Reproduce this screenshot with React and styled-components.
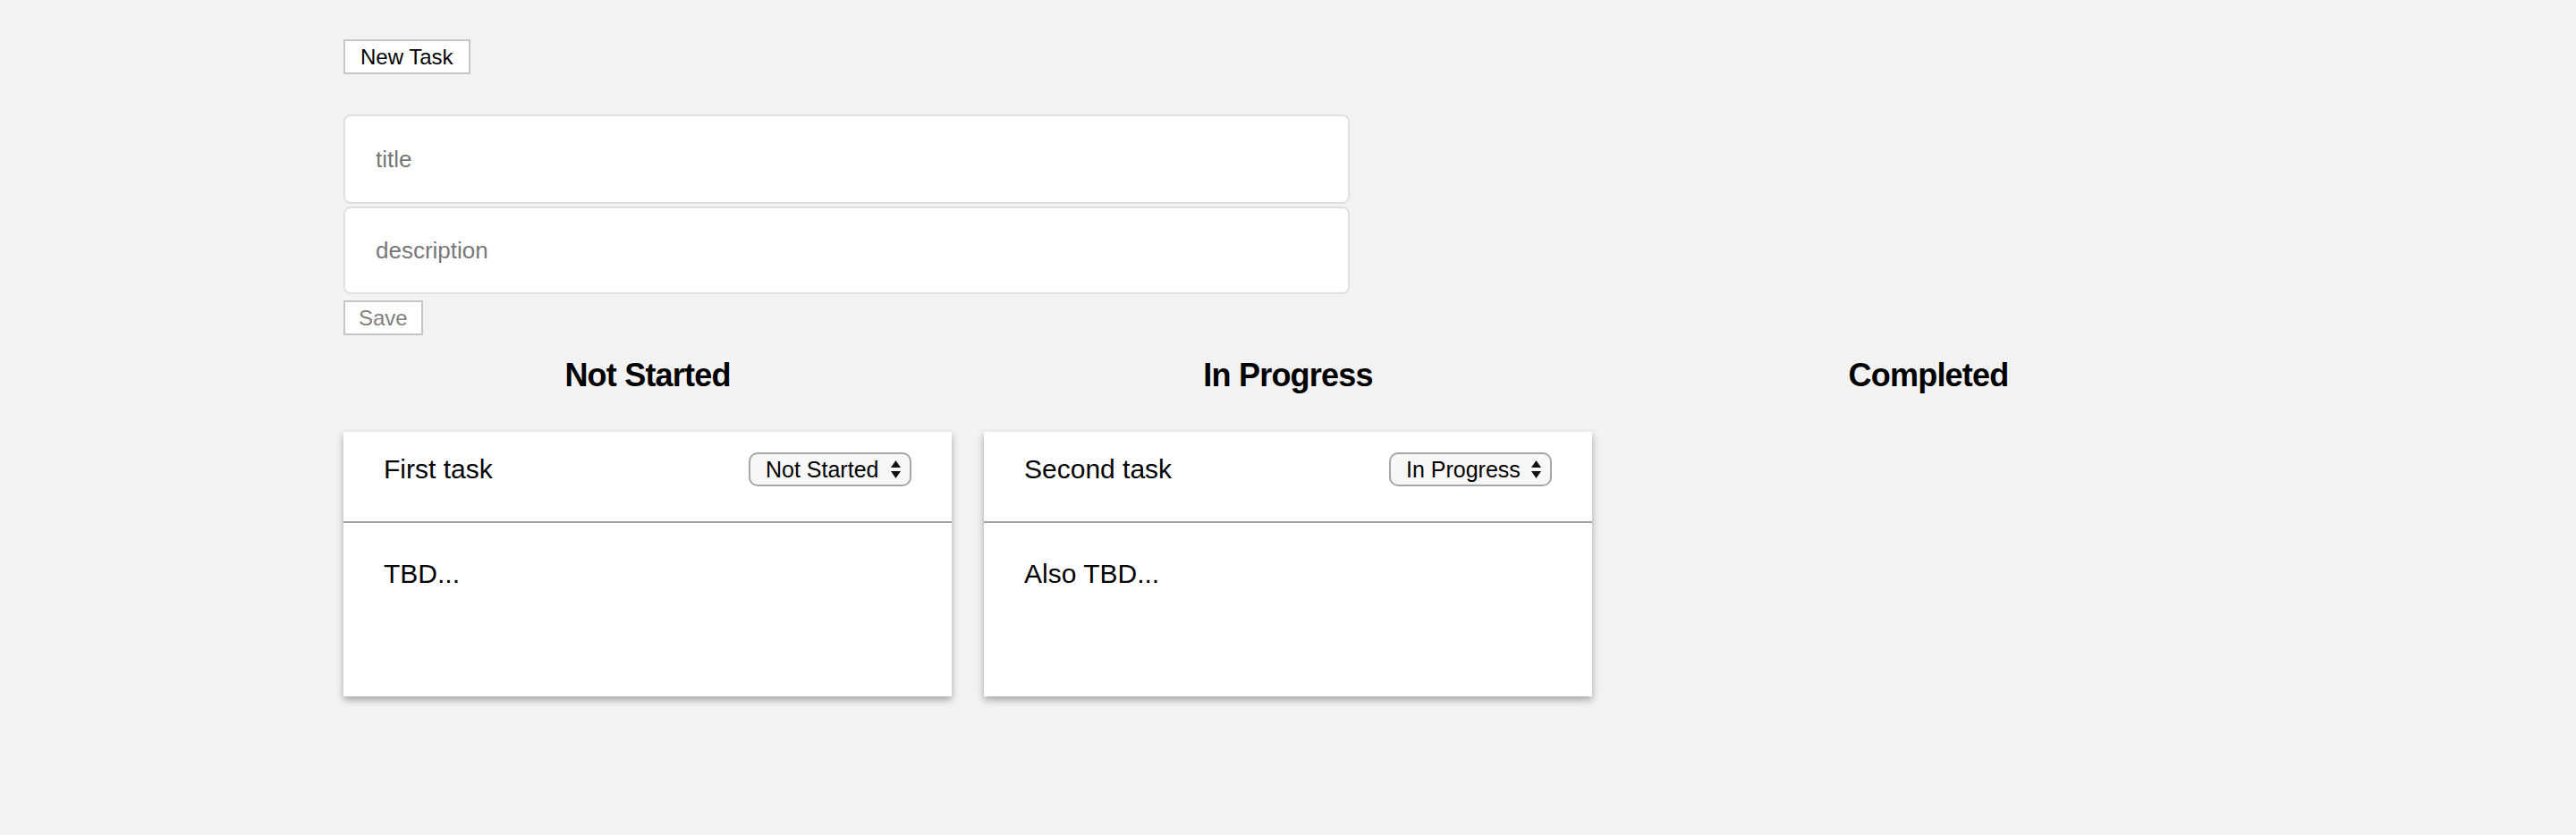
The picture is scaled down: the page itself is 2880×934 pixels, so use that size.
import React from "react";
import styled, { createGlobalStyle } from "styled-components";

const GlobalStyle = createGlobalStyle`
  html, body {
    margin: 0;
    padding: 0;
    background: #f2f2f2;
    font-family: "Liberation Sans", Arial, Helvetica, sans-serif;
    color: #000;
  }
`;

const Page = styled.div`
  width: 2112px;
  margin: 0 auto;
  padding-top: 44px;
  padding-bottom: 40px;
`;

const Button = styled.button`
  box-sizing: border-box;
  height: 39px;
  padding: 0 ${(p) => (p.$compact ? 15 : 17)}px;
  border: 2px solid #c6c6c6;
  background: #fff;
  font-family: "Liberation Sans", Arial, sans-serif;
  font-size: 24px;
  color: ${(p) => (p.disabled ? "#808080" : "#000")};
  cursor: pointer;
`;

const Form = styled.form`
  margin-top: 45px;
  width: 1125px;
  display: flex;
  flex-direction: column;
  align-items: flex-start;
  gap: 3px;
`;

const Field = styled.input`
  box-sizing: border-box;
  width: 100%;
  height: ${(p) => p.$h}px;
  padding: 0 34px;
  border: 2px solid #e0e0e0;
  border-radius: 8px;
  background: #fff;
  font-family: "Liberation Sans", Arial, sans-serif;
  font-size: 26px;
  outline: none;
  &::placeholder {
    color: #777;
  }
`;

const SaveRow = styled.div`
  margin-top: 4px;
`;

const Board = styled.div`
  margin-top: 24px;
  display: grid;
  grid-template-columns: repeat(3, 680px);
  column-gap: 36px;
`;

const Column = styled.section`
  display: flex;
  flex-direction: column;
  gap: 43px;
`;

const ColumnTitle = styled.h3`
  margin: 0;
  text-align: center;
  font-size: 36px;
  line-height: 41px;
  font-weight: bold;
  letter-spacing: -0.8px;
`;

const Card = styled.article`
  background: #fff;
  height: 296px;
  box-shadow: 0 4px 8px rgba(0, 0, 0, 0.32);
  display: flex;
  flex-direction: column;
`;

const CardHeader = styled.header`
  display: flex;
  align-items: center;
  justify-content: space-between;
  padding: 23px 45px 39px 45px;
  border-bottom: 2px solid #a3a3a3;
`;

const CardTitle = styled.span`
  font-size: 30px;
`;

const CardBody = styled.div`
  padding: 40px 45px 0;
  font-size: 30px;
`;

const SelectWrap = styled.div`
  position: relative;
  width: 182px;
  height: 38px;
`;

const Select = styled.select`
  appearance: none;
  -webkit-appearance: none;
  box-sizing: border-box;
  width: 100%;
  height: 100%;
  padding: 0 0 0 17px;
  border: 2px solid #a6a6a6;
  border-radius: 10px;
  background: #f7f7f7;
  font-family: "Liberation Sans", Arial, sans-serif;
  font-size: 25px;
  color: #000;
  outline: none;
`;

const Arrows = styled.svg`
  position: absolute;
  right: 12px;
  top: 9px;
  pointer-events: none;
`;

const STATUSES = ["Not Started", "In Progress", "Completed"];

const tasks = [
  { id: 1, title: "First task", description: "TBD...", status: "Not Started" },
  { id: 2, title: "Second task", description: "Also TBD...", status: "In Progress" },
];

function StatusSelect({ value }) {
  return (
    <SelectWrap>
      <Select defaultValue={value}>
        {STATUSES.map((s) => (
          <option key={s}>{s}</option>
        ))}
      </Select>
      <Arrows width="11" height="20" viewBox="0 0 11 20">
        <path d="M5.5 0 L11 8 H0 Z" fill="#111" />
        <path d="M5.5 20 L11 12 H0 Z" fill="#111" />
      </Arrows>
    </SelectWrap>
  );
}

export default function App() {
  return (
    <>
      <GlobalStyle />
      <Page>
        <Button type="button">New Task</Button>
        <Form onSubmit={(e) => e.preventDefault()}>
          <Field $h={100} placeholder="title" />
          <Field $h={98} placeholder="description" />
          <SaveRow>
            <Button type="submit" disabled $compact>
              Save
            </Button>
          </SaveRow>
        </Form>
        <Board>
          {STATUSES.map((status) => (
            <Column key={status}>
              <ColumnTitle>{status}</ColumnTitle>
              {tasks
                .filter((t) => t.status === status)
                .map((t) => (
                  <Card key={t.id}>
                    <CardHeader>
                      <CardTitle>{t.title}</CardTitle>
                      <StatusSelect value={t.status} />
                    </CardHeader>
                    <CardBody>{t.description}</CardBody>
                  </Card>
                ))}
            </Column>
          ))}
        </Board>
      </Page>
    </>
  );
}
